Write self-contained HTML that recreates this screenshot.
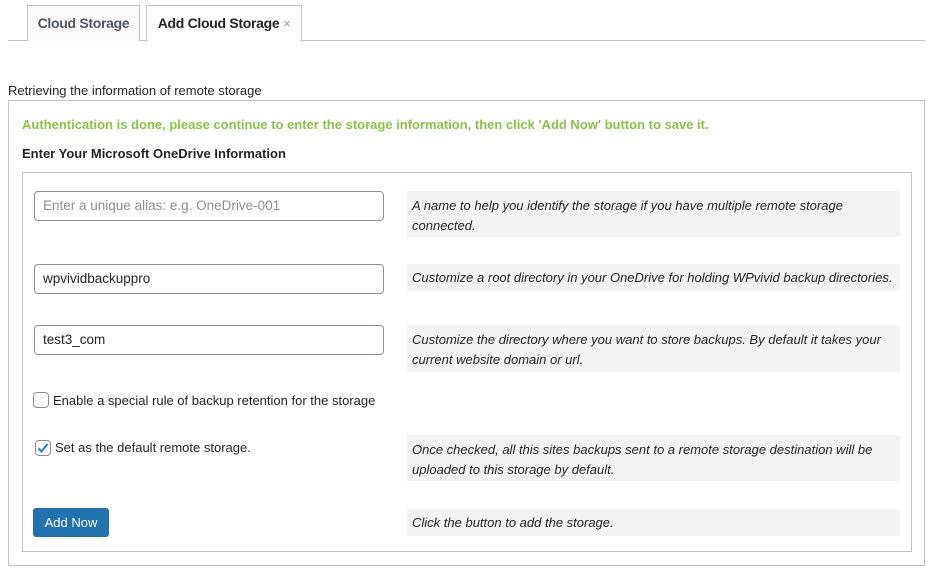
<!DOCTYPE html>
<html><head><style>
*{box-sizing:border-box;margin:0;padding:0}
body{width:934px;height:571px;background:#fff;font-family:"Liberation Sans",sans-serif;font-size:13px;color:#1d2327;position:relative;overflow:hidden}
.a{position:absolute}
.tab{position:absolute;top:5px;height:36px;border:1px solid #c3c4c7;border-bottom:none;background:#fafafa;font-size:14px;font-weight:bold;line-height:34px;text-align:center}
.inp{position:absolute;left:34px;width:350px;height:30px;border:1px solid #8c8f94;border-radius:4px;padding:0 8px;line-height:28px;font-size:13.5px}
.d{position:absolute;left:407px;width:493px;background:#f3f3f3;font-style:italic;font-size:13px;line-height:20px;padding:5px 5px}
.cb{position:absolute;width:16px;height:16px;border:1px solid #8c8f94;border-radius:4px;background:#fff}
</style></head><body>
<div class="a" style="left:8px;top:40px;width:917px;height:1px;background:#c3c4c7"></div>
<div class="tab" style="left:27px;width:113px;color:#50575e;letter-spacing:-0.3px">Cloud Storage</div>
<div class="tab" style="left:146px;width:156px;height:37px;background:#fff;color:#1d2327;letter-spacing:-0.3px">Add Cloud Storage <span style="color:#999;font-weight:normal;font-size:13px">×</span></div>
<div class="a" style="left:8px;top:83px;font-size:13px">Retrieving the information of remote storage</div>
<div class="a" style="left:8px;top:100px;width:917px;height:466px;border:1px solid #c3c4c7"></div>
<div class="a" style="left:22px;top:117px;color:#8bc34a;font-weight:bold">Authentication is done, please continue to enter the storage information, then click 'Add Now' button to save it.</div>
<div class="a" style="left:22px;top:146px;font-weight:bold">Enter Your Microsoft OneDrive Information</div>
<div class="a" style="left:22px;top:172px;width:890px;height:380px;border:1px solid #c3c4c7"></div>
<div class="inp" style="top:191px;color:#8c8f94">Enter a unique alias: e.g. OneDrive-001</div>
<div class="inp" style="top:264px">wpvividbackuppro</div>
<div class="inp" style="top:325px">test3_com</div>
<div class="d" style="top:191px;height:46px">A name to help you identify the storage if you have multiple remote storage<br>connected.</div>
<div class="d" style="top:264px;height:27px;padding-top:4px">Customize a root directory in your OneDrive for holding WPvivid backup directories.</div>
<div class="d" style="top:325px;height:47px">Customize the directory where you want to store backups. By default it takes your current website domain or url.</div>
<div class="d" style="top:435px;height:46px">Once checked, all this sites backups sent to a remote storage destination will be uploaded to this storage by default.</div>
<div class="d" style="top:509px;height:27px;padding-top:4px">Click the button to add the storage.</div>
<div class="cb" style="left:33px;top:392px"></div>
<div class="a" style="left:53px;top:393px">Enable a special rule of backup retention for the storage</div>
<div class="cb" style="left:35px;top:440px"><svg width="14" height="14" viewBox="0 0 14 14" style="position:absolute;left:0;top:0"><path d="M2.5 7.5 L5.5 10.5 L11.5 3" stroke="#3582c4" stroke-width="2.2" fill="none"/></svg></div>
<div class="a" style="left:55px;top:440px">Set as the default remote storage.</div>
<div class="a" style="left:33px;top:508px;width:76px;height:29px;background:#2271b1;border-radius:3px;color:#fff;text-align:center;line-height:29px;font-size:13px">Add Now</div>
</body></html>
